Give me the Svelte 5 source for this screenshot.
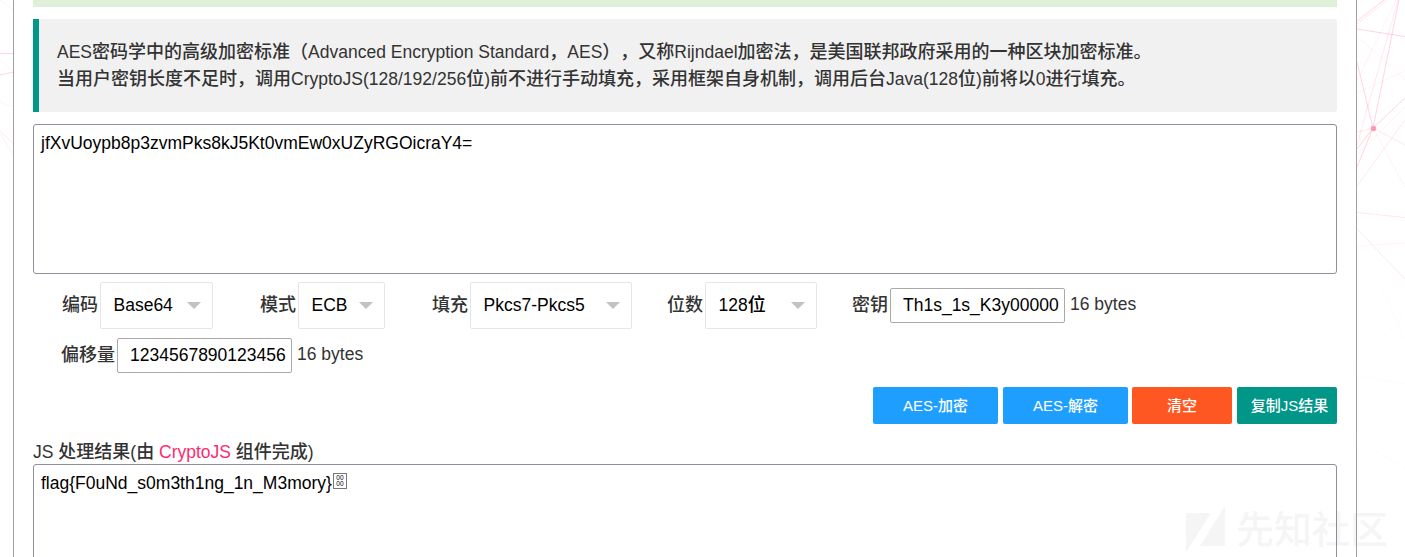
<script>
  const fields = [
    { label: '编码', value: 'Base64', w: 113, gap: 47 },
    { label: '模式', value: 'ECB', w: 87, gap: 47 },
    { label: '填充', value: 'Pkcs7-Pkcs5', w: 162, gap: 35 },
    { label: '位数', value: '128位', w: 112, gap: 35 }
  ];
  const buttons = [
    { text: 'AES-加密', w: 125, gap: 5, color: '#1e9fff' },
    { text: 'AES-解密', w: 125, gap: 4, color: '#1e9fff' },
    { text: '清空', w: 100, gap: 5, color: '#ff5722' },
    { text: '复制JS结果', w: 100, gap: 0, color: '#009688', indent: 5 }
  ];
  const intro = [
    'AES密码学中的高级加密标准（Advanced Encryption Standard，AES），又称Rijndael加密法，是美国联邦政府采用的一种区块加密标准。',
    '当用户密钥长度不足时，调用CryptoJS(128/192/256位)前不进行手动填充，采用框架自身机制，调用后台Java(128位)前将以0进行填充。'
  ];
  // Latin runs are set slightly smaller than the Chinese runs.
  const runs = (s) => s.match(/[\x20-\x7e]+|[^\x20-\x7e]+/g).map((t) => ({ t, cjk: t.charCodeAt(0) > 126 }));
</script>

{#snippet mixed(s)}{#each runs(s) as r}<span class:cjk={r.cjk}>{r.t}</span>{/each}{/snippet}

<div class="page">
  <svg class="net" width="1405" height="557" viewBox="0 0 1405 557" fill="none" stroke="#ff5c85">
    <g stroke-opacity=".26">
      <path d="M1357 21L1384 0M1357 29L1405 36.500M1399 0L1373 128M1357 62L1373 128L1405 98M1373 128L1357 149M1373 128L1357 167M0 53.500H14M0 75L14 72" />
    </g>
    <g stroke-opacity=".15">
      <path d="M1357 24L1387 0M1398 0L1357 145M1357 132L1373 128L1405 145M1405 120L1357 186M1357 212.500L1405 217.500M1357 229L1405 279M0 131L14 144" />
    </g>
    <g stroke-opacity=".07">
      <path d="M1396 0L1357 81M1357 36L1405 80M1405 71L1357 93M1405 107L1357 155M1373 128L1405 187M1357 246L1405 243M0 0L14 11M0 60L14 72M0 102L14 107M0 133L14 156" />
    </g>
    <g stroke-opacity=".03">
      <path d="M1357 440L1405 468M1357 375L1405 384M1380 284L1405 340M1405 315L1357 365" />
    </g>
    <circle cx="1373.500" cy="128.500" r="2.700" fill="#ff98b5" stroke="none" />
  </svg>

  <main>
    <div class="notice"></div>
    <blockquote>
      {#each intro as line}<div>{@render mixed(line)}</div>{/each}
    </blockquote>
    <div class="area source">jfXvUoypb8p3zvmPks8kJ5Kt0vmEw0xUZyRGOicraY4=</div>

    <div class="row first">
      {#each fields as f}
        <span class="label">{f.label}</span>
        <div class="select" style="width:{f.w}px;margin-right:{f.gap}px">
          <span>{@render mixed(f.value)}</span><i></i>
        </div>
      {/each}
      <span class="label">密钥</span>
      <div class="input">Th1s_1s_K3y00000</div>
      <span class="bytes">16 bytes</span>
    </div>
    <div class="row second">
      <span class="label">偏移量</span>
      <div class="input">1234567890123456</div>
      <span class="bytes">16 bytes</span>
    </div>

    <div class="buttons">
      {#each buttons as b}
        <button style="width:{b.w}px;margin-right:{b.gap}px;padding-left:{b.indent ?? 0}px;background:{b.color}">{#each runs(b.text) as r}<span class:strong={r.cjk}>{r.t}</span>{/each}</button>
      {/each}
    </div>

    <div class="title">{@render mixed('JS 处理结果(由 ')}<a>CryptoJS</a>{@render mixed(' 组件完成)')}</div>
    <div class="area result"><span>flag&#123;F0uNd_s0m3th1ng_1n_M3mory&#125;</span><span class="hex"><b>00</b><b>00</b></span></div>
  </main>

  <div class="watermark">
    <svg width="40" height="46" viewBox="0 0 40 46" fill="#000"><path d="M0 7H25L0 46ZM39 0V40H14Z" /></svg>
    <span>先知社区</span>
  </div>
</div>

<style>
  :global(body) { background: #fff; overflow: hidden; }
  .page {
    position: relative;
    height: 557px;
    overflow: hidden;
    color: #333;
    font: 17.5px/27px "Liberation Sans", "Noto Sans CJK SC", sans-serif;
    text-spacing-trim: space-all;
  }
  .cjk, .label { font-size: 18px; font-weight: 500; }
  .net { position: absolute; left: 0; top: 0; }
  main {
    position: relative;
    box-sizing: border-box;
    width: 1344px;
    height: 557px;
    margin-left: 13px;
    padding: 0 19px;
    border: solid #a0a0a0;
    border-width: 0 1px;
    background: #fff;
    overflow: hidden;
  }
  .notice { height: 7px; background: #dff0d8; }
  blockquote {
    box-sizing: border-box;
    height: 93px;
    margin: 12px 0;
    padding: 20px 0 0 18px;
    border-left: 6px solid #009688;
    border-radius: 0 3px 3px 0;
    background: #f1f1f1;
    white-space: nowrap;
  }
  blockquote div { height: 27px; }
  .area {
    box-sizing: border-box;
    height: 150px;
    padding: 5px 7px;
    border: 1px solid #8f8f9d;
    border-radius: 3px;
    background: #fff;
    color: #000;
  }
  .row { display: flex; align-items: center; white-space: nowrap; }
  .first { height: 47px; margin: 8px 0 0 29px; }
  .second { height: 35px; margin: 9px 0 0 28px; }
  .label { width: 36px; margin-right: 2px; flex: none; }
  .second .label { width: 54px; }
  .select {
    box-sizing: border-box;
    display: flex;
    align-items: center;
    justify-content: space-between;
    height: 47px;
    padding: 0 11px 0 12.5px;
    border: 1px solid #e6e6e6;
    border-radius: 2px;
    color: #000;
  }
  .select i { border: 7px solid transparent; border-top-color: #c2c2c2; border-bottom: 0; }
  .input {
    box-sizing: border-box;
    width: 175px;
    height: 35px;
    padding: 0 0 0 12px;
    border: 1px solid #aaa;
    border-radius: 2px;
    color: #000;
    line-height: 33px;
  }
  .bytes { margin: -2px 0 0 5px; }
  .buttons { display: flex; justify-content: flex-end; margin-top: 14px; }
  button {
    box-sizing: border-box;
    height: 37px;
    padding: 0;
    border: 0;
    border-radius: 2px;
    color: #fff;
    font: 15px/37px "Liberation Sans", "Noto Sans CJK SC", sans-serif;
  }
  .strong { font-weight: 500; }
  .title { height: 26px; margin-top: 15px; white-space: nowrap; }
  .title a { color: #ff2a6d; }
  .result { display: flex; align-items: flex-start; margin-top: -1px; }
  .hex {
    display: flex;
    flex-direction: column;
    align-items: center;
    box-sizing: border-box;
    width: 14px;
    height: 16px;
    margin: 3px 0 0 1px;
    padding-top: 1px;
    border: 1px solid #777;
    font: 6.5px/6px "Liberation Sans", sans-serif;
  }
  .hex b { font-weight: 400; }
  .watermark {
    position: absolute;
    left: 1186px;
    top: 506px;
    display: flex;
    gap: 10px;
    opacity: .035;
    color: #000;
    font-size: 38px;
    font-weight: 500;
    line-height: 48px;
    white-space: nowrap;
  }
</style>
